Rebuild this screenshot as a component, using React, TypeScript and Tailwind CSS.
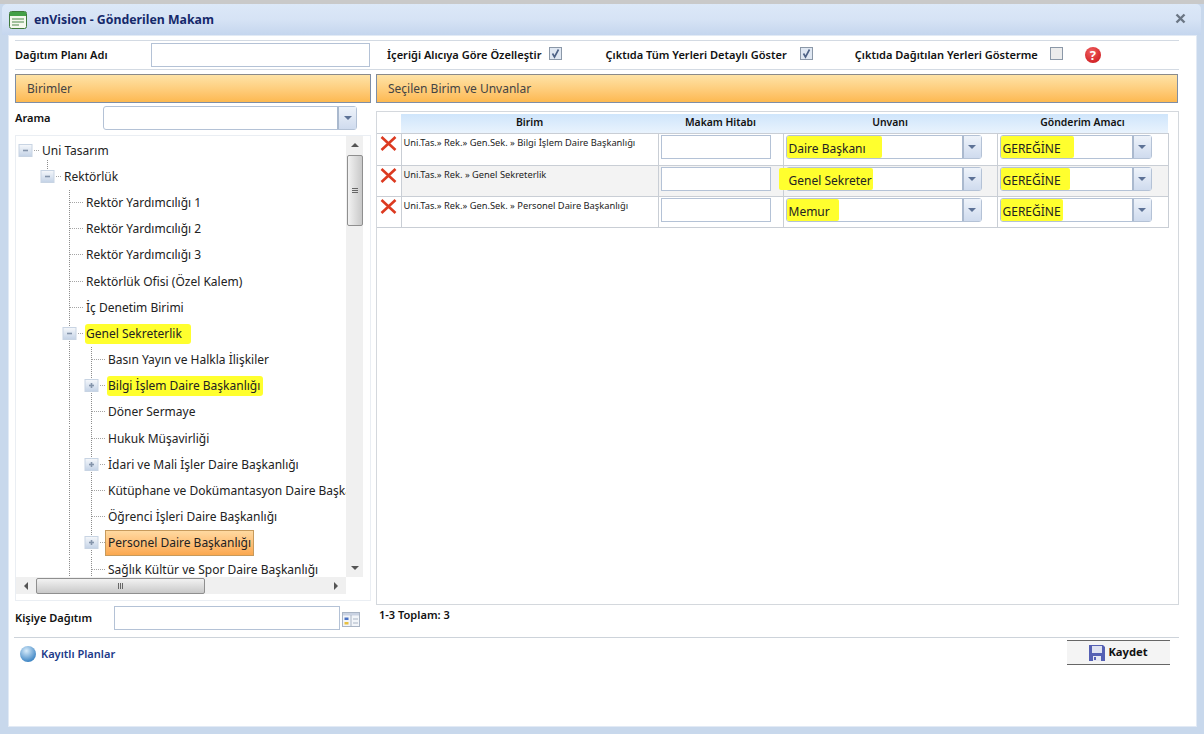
import React from "react";

type Row = { t: string; level: number; icon?: "minus" | "plus"; mark?: string; selected?: boolean; stub?: boolean };

const treeRows: Row[] = [
  { t: "Uni Tasarım", level: 0, icon: "minus" },
  { t: "Rektörlük", level: 1, icon: "minus", stub: true },
  { t: "Rektör Yardımcılığı 1", level: 2 },
  { t: "Rektör Yardımcılığı 2", level: 2 },
  { t: "Rektör Yardımcılığı 3", level: 2 },
  { t: "Rektörlük Ofisi (Özel Kalem)", level: 2 },
  { t: "İç Denetim Birimi", level: 2 },
  { t: "Genel Sekreterlik", level: 2, icon: "minus", mark: "pr-[9px]" },
  { t: "Basın Yayın ve Halkla İlişkiler", level: 3 },
  { t: "Bilgi İşlem Daire Başkanlığı", level: 3, icon: "plus", mark: "pr-[3px]" },
  { t: "Döner Sermaye", level: 3 },
  { t: "Hukuk Müşavirliği", level: 3 },
  { t: "İdari ve Mali İşler Daire Başkanlığı", level: 3, icon: "plus" },
  { t: "Kütüphane ve Dokümantasyon Daire Başkanlığı", level: 3 },
  { t: "Öğrenci İşleri Daire Başkanlığı", level: 3 },
  { t: "Personel Daire Başkanlığı", level: 3, icon: "plus", selected: true },
  { t: "Sağlık Kültür ve Spor Daire Başkanlığı", level: 3 },
];

function Connector({ icon, stub, through }: { icon?: "minus" | "plus"; stub?: boolean; through?: boolean }) {
  return (
    <svg width="22" height="26" viewBox="0 0 22 26" className="shrink-0 overflow-visible">
      {(!icon || through) && <path d="M5.5 0V26" stroke="#8d8d8d" strokeDasharray="1 1" />}
      {!icon && <path d="M6 12.5H19" stroke="#a5a5a5" strokeDasharray="1 1" />}
      {icon && (
        <>
          {stub ? <path d="M5.5 -4V6" stroke="#8d8d8d" strokeDasharray="1 1" /> : null}
          <path d="M14 12.5H19" stroke="#a5a5a5" strokeDasharray="1 1" />
          <defs>
            <linearGradient id="ex" x1="0" y1="0" x2="0" y2="1">
              <stop offset="0" stopColor="#f6f8fb" />
              <stop offset="1" stopColor="#c3d2e6" />
            </linearGradient>
          </defs>
          <rect x="-1" y="6.5" width="13" height="12" fill="url(#ex)" stroke="#c8d4e3" />
          <path d="M3 12.5H8" stroke="#8494aa" strokeWidth="1.6" />
          {icon === "plus" && <path d="M5.5 10V15" stroke="#8494aa" strokeWidth="1.6" />}
        </>
      )}
    </svg>
  );
}

function Guide({ on }: { on: boolean }) {
  return (
    <svg width="22" height="26" viewBox="0 0 22 26" className="shrink-0">
      {on && <path d="M5.5 0V26" stroke="#8d8d8d" strokeDasharray="1 1" />}
    </svg>
  );
}

function TreeRow({ r }: { r: Row }) {
  const cells = [];
  for (let i = 0; i < r.level; i++) {
    cells.push(<Guide key={i} on={i === 2} />);
  }
  return (
    <div className="flex items-center h-[26.2px] pl-[4px] whitespace-nowrap shrink-0">
      {cells}
      <Connector icon={r.icon} stub={r.stub} through={r.level >= 2} />
      {r.selected ? (
        <span className="-ml-[3px] h-[26px] px-[2px] flex items-center border border-[#c79a5c] bg-gradient-to-b from-[#ffd9a0] to-[#fba84f]">{r.t}</span>
      ) : r.mark ? (
        <span className={`bg-[#ffff2e] -ml-[1px] pl-[1px] py-[1px] rounded-[3px] ${r.mark}`}>{r.t}</span>
      ) : (
        <span>{r.t}</span>
      )}
    </div>
  );
}

function Arrow() {
  return <span className="w-0 h-0 border-x-[4px] border-x-transparent border-t-[4px] border-t-[#5d7296]" />;
}

function Combo({ w, value, mark, spill }: { w: string; value?: string; mark?: string; spill?: boolean }) {
  return (
    <div className={`flex h-[24px] items-stretch rounded-[3px] border border-[#b4c2d6] bg-white ${w}`}>
      <div className="flex-1 flex items-center min-w-0">
        {value && (
          <span className={`bg-[#ffff2e] h-[22px] pt-[5px] flex items-center rounded-[2px] ${spill ? "-ml-[8px] pl-[10px]" : "pl-[2px]"} ${mark}`}>{value}</span>
        )}
      </div>
      <div className="w-[19px] flex items-center justify-center border-l-2 border-l-[#aab9ce] bg-gradient-to-b from-[#eef3fa] to-[#cfdbee]">
        <Arrow />
      </div>
    </div>
  );
}

function Check({ checked }: { checked?: boolean }) {
  return (
    <svg width="13" height="13" viewBox="0 0 13 13" className="shrink-0 block">
      <rect x="0.5" y="0.5" width="12" height="12" fill={checked ? "#dfe7f2" : "#ececec"} stroke="#8b98a8" />
      {checked && <path d="M3.5 6.5L5.5 10L9.5 2.5" fill="none" stroke="#4d6185" strokeWidth="1.6" />}
    </svg>
  );
}

function RedX() {
  return (
    <svg width="17" height="15" viewBox="0 0 17 15" className="shrink-0 block">
      <path d="M1.5 1L15.5 14M15.5 1L1.5 14" stroke="#dc3a20" strokeWidth="2.6" />
    </svg>
  );
}

const gridRows = [
  { b: "Uni.Tas.» Rek.» Gen.Sek. » Bilgi İşlem Daire Başkanlığı", u: "Daire Başkanı", um: "pr-[16px]", am: "pr-[13px]", h: "h-[32px]", alt: false, spill: false },
  { b: "Uni.Tas.» Rek. » Genel Sekreterlik", u: "Genel Sekreter", um: "pr-[1px]", am: "pr-[9px]", h: "h-[31px]", alt: true, spill: true },
  { b: "Uni.Tas.» Rek.» Gen.Sek. » Personel Daire Başkanlığı", u: "Memur", um: "pr-[9px]", am: "pr-[2px]", h: "h-[31px]", alt: false, spill: false },
];

const headCell = "p-0 bg-gradient-to-b from-[#cfe5fb] to-[#e9f3fd] font-semibold";
const barClass = "h-[29px] shrink-0 border border-[#7e8ea6] border-t-[#8a8a8a] bg-gradient-to-b from-[#fee3a6] to-[#fdb950] flex items-center text-[#444]";
const label = "text-[11.05px] font-semibold text-[#111]";

export default function App() {
  return (
    <div className="w-[1204px] h-[734px] overflow-hidden bg-[#c8d8ec] font-['Noto_Sans',sans-serif] text-[12px] text-[#222] flex flex-col">
      <div className="h-[4px] bg-[#c9c9c9] shrink-0" />
      <div className="h-[31px] shrink-0 ml-[2px] mr-[3px] rounded-t-[5px] bg-gradient-to-b from-[#dce8f8] via-[#d6e3f5] to-[#c5d6ee] flex items-center pl-[7px] pr-[15px]">
        <svg width="18" height="18" viewBox="0 0 18 18" className="shrink-0">
          <rect x="0.5" y="0.5" width="17" height="17" rx="2" fill="#f4f8ee" stroke="#3f7a3c" />
          <rect x="1" y="1" width="16" height="4" fill="#43a047" />
          <path d="M3 8H15M3 11H15M3 14H10" stroke="#4d8a4a" strokeWidth="1.2" />
        </svg>
        <span className="ml-[7px] mt-[2px] text-[12.3px] font-bold text-[#15296b]">enVision - Gönderilen Makam</span>
        <svg width="11" height="11" viewBox="0 0 11 11" className="ml-auto -mt-[2px] shrink-0">
          <path d="M1.5 1.5L9.5 9.5M9.5 1.5L1.5 9.5" stroke="#6b7684" strokeWidth="2.4" />
        </svg>
      </div>
      <div className="h-[692px] ml-[8px] mr-[7px] shrink-0 bg-white border border-[#e2eaf5] flex flex-col pl-[6px] pr-[18px] pt-[4px]">
        <div className="h-[30px] shrink-0 border-y border-[#d3dae3] flex items-center -mr-[1px]">
          <span className={`w-[136px] shrink-0 ${label}`}>Dağıtım Planı Adı</span>
          <div className="w-[219px] h-[24px] shrink-0 border border-[#b4c2d6]" />
          <span className={`ml-[17px] ${label}`}>İçeriği Alıcıya Göre Özelleştir</span>
          <span className="ml-[8px] -mt-[3px]"><Check checked /></span>
          <span className={`ml-[43px] ${label}`}>Çıktıda Tüm Yerleri Detaylı Göster</span>
          <span className="ml-[13px] -mt-[3px]"><Check checked /></span>
          <span className={`ml-[42px] ${label}`}>Çıktıda Dağıtılan Yerleri Gösterme</span>
          <span className="ml-[12px] -mt-[3px]"><Check /></span>
          <span className="ml-[22px] w-[16px] h-[16px] rounded-full bg-[radial-gradient(circle_at_40%_30%,#f06060,#c80f14)] text-white font-bold text-[13px] leading-[16px] text-center">?</span>
        </div>
        <div className="flex gap-[5px] mt-[4px] flex-1 min-h-0">
          <div className="w-[356px] shrink-0 flex flex-col">
            <div className={`${barClass} pl-[11px]`}>Birimler</div>
            <div className="flex items-center h-[24px] mt-[3px] shrink-0">
              <span className={`w-[88px] shrink-0 ${label}`}>Arama</span>
              <Combo w="w-[254px]" />
            </div>
            <div className="mt-[5px] h-[466px] shrink-0 border border-[#eaeef3] flex flex-col pr-[7px] pb-[6px]">
              <div className="flex flex-1 min-h-0">
                <div className="w-[330px] shrink-0 overflow-hidden flex flex-col pt-[1.5px]">
                  {treeRows.map((r) => (
                    <TreeRow key={r.t} r={r} />
                  ))}
                </div>
                <div className="w-[17px] shrink-0 bg-[#f0f0f0] flex flex-col items-center">
                  <span className="mt-[7px] w-0 h-0 border-x-[4px] border-x-transparent border-b-[4px] border-b-[#555]" />
                  <div className="mt-[8px] w-[16px] h-[71px] border border-[#8f8f8f] rounded-[2px] bg-gradient-to-r from-[#f2f2f2] to-[#c9c9c9] flex flex-col items-center justify-center gap-[1px]">
                    <i className="block w-[6px] h-px bg-[#666]" />
                    <i className="block w-[6px] h-px bg-[#666]" />
                    <i className="block w-[6px] h-px bg-[#666]" />
                  </div>
                  <span className="mt-auto mb-[7px] w-0 h-0 border-x-[4px] border-x-transparent border-t-[4px] border-t-[#555]" />
                </div>
              </div>
              <div className="h-[17px] shrink-0 flex items-center bg-[#f0f0f0] mr-[17px]">
                <span className="ml-[8px] w-0 h-0 border-y-[4px] border-y-transparent border-r-[4px] border-r-[#555]" />
                <div className="ml-[8px] w-[169px] h-[16px] border border-[#8f8f8f] rounded-[2px] bg-gradient-to-b from-[#f2f2f2] to-[#c9c9c9] flex items-center justify-center gap-[1px]">
                  <i className="block h-[6px] w-px bg-[#666]" />
                  <i className="block h-[6px] w-px bg-[#666]" />
                  <i className="block h-[6px] w-px bg-[#666]" />
                </div>
                <span className="ml-auto mr-[8px] w-0 h-0 border-y-[4px] border-y-transparent border-l-[4px] border-l-[#555]" />
              </div>
            </div>
            <div className="flex items-center mt-[5px] h-[24px] shrink-0">
              <span className={`w-[99px] shrink-0 ${label}`}>Kişiye Dağıtım</span>
              <div className="w-[226px] h-[24px] border border-[#b4c2d6]" />
              <svg width="18" height="15" viewBox="0 0 18 15" className="ml-[2px] mt-[3px] shrink-0">
                <rect x="0.5" y="0.5" width="17" height="14" fill="#f2f5f9" stroke="#a9b4c4" />
                <rect x="1" y="1" width="16" height="2.5" fill="#c9d2e2" />
                <path d="M9 3V14" stroke="#a9b4c4" />
                <rect x="2.5" y="5.5" width="4" height="2.5" fill="#4a72c4" />
                <rect x="2.5" y="10" width="4" height="2.5" fill="#e8c040" />
                <path d="M11 7H16M11 11H16" stroke="#a9b4c4" />
              </svg>
            </div>
          </div>
          <div className="flex-1 min-w-0 flex flex-col">
            <div className={`${barClass} pl-[11px]`}>Seçilen Birim ve Unvanlar</div>
            <div className="mt-[8px] h-[494px] shrink-0 border border-[#d4d8dd] pt-[2px] pr-[8px] -mr-[1px]">
              <table className="w-[791px] border-collapse table-fixed">
                <thead>
                  <tr className="h-[19px] text-[10.4px] text-[#111]">
                    <th className="w-[24px] p-0" />
                    <th className={`w-[257px] ${headCell}`}>Birim</th>
                    <th className={`w-[125px] ${headCell}`}>Makam Hitabı</th>
                    <th className={`w-[214px] ${headCell}`}>Unvanı</th>
                    <th className={`w-[171px] ${headCell}`}>Gönderim Amacı</th>
                  </tr>
                </thead>
                <tbody>
                  {gridRows.map((r) => (
                    <tr key={r.b} className={`${r.h} border-y border-[#c9ced5] ${r.alt ? "bg-[#f3f3f3]" : ""}`}>
                      <td className="p-0 pl-[3px] align-top pt-[2px] bg-white"><RedX /></td>
                      <td className="p-0 pl-[2px] pt-[2px] align-top border-x border-[#c9ced5] text-[9.3px] leading-[13px] text-[#222] whitespace-nowrap">{r.b}</td>
                      <td className="p-0 pl-[2px] pt-[1px] align-top border-r border-[#c9ced5]">
                        <div className="w-[110px] h-[24px] border border-[#b4c2d6] bg-white" />
                      </td>
                      <td className="p-0 pl-[2px] pt-[1px] align-top border-r border-[#c9ced5]">
                        <Combo w="w-[196px]" value={r.u} mark={r.um} spill={r.spill} />
                      </td>
                      <td className="p-0 pl-[2px] pt-[1px] align-top border-r border-[#c9ced5]">
                        <Combo w="w-[152px]" value="GEREĞİNE" mark={r.am} />
                      </td>
                    </tr>
                  ))}
                </tbody>
              </table>
            </div>
            <span className={`ml-[3px] mt-[2px] ${label}`}>1-3 Toplam: 3</span>
          </div>
        </div>
        <div className="h-[89px] shrink-0 border-t border-[#cdd3da] -ml-[1px] -mr-[1px] flex items-start pl-[6px] pr-[9px]">
          <span className="mt-[8px] w-[16px] h-[16px] rounded-full shrink-0 bg-[radial-gradient(circle_at_40%_30%,#d8ecfb,#3f86c4_75%)]" />
          <span className={`mt-[8px] ml-[5px] text-[11.05px] font-semibold text-[#1c3a8a]`}>Kayıtlı Planlar</span>
          <div className="ml-auto mt-[2px] w-[103px] h-[25px] bg-[#f4f4f4] border-y border-[#666] flex items-center justify-center gap-[3px] text-[11.2px] font-bold text-[#111]">
            <svg width="16" height="18" viewBox="0 0 16 18" className="shrink-0">
              <path d="M0 1H14L16 3V17H0Z" fill="#5560b4" />
              <rect x="3" y="2" width="10" height="7" fill="#dfe2f2" />
              <rect x="4" y="12" width="8" height="5" fill="#e6e8f4" />
              <rect x="5" y="13" width="2" height="3" fill="#5560b4" />
            </svg>
            <span>Kaydet</span>
          </div>
        </div>
      </div>
    </div>
  );
}
